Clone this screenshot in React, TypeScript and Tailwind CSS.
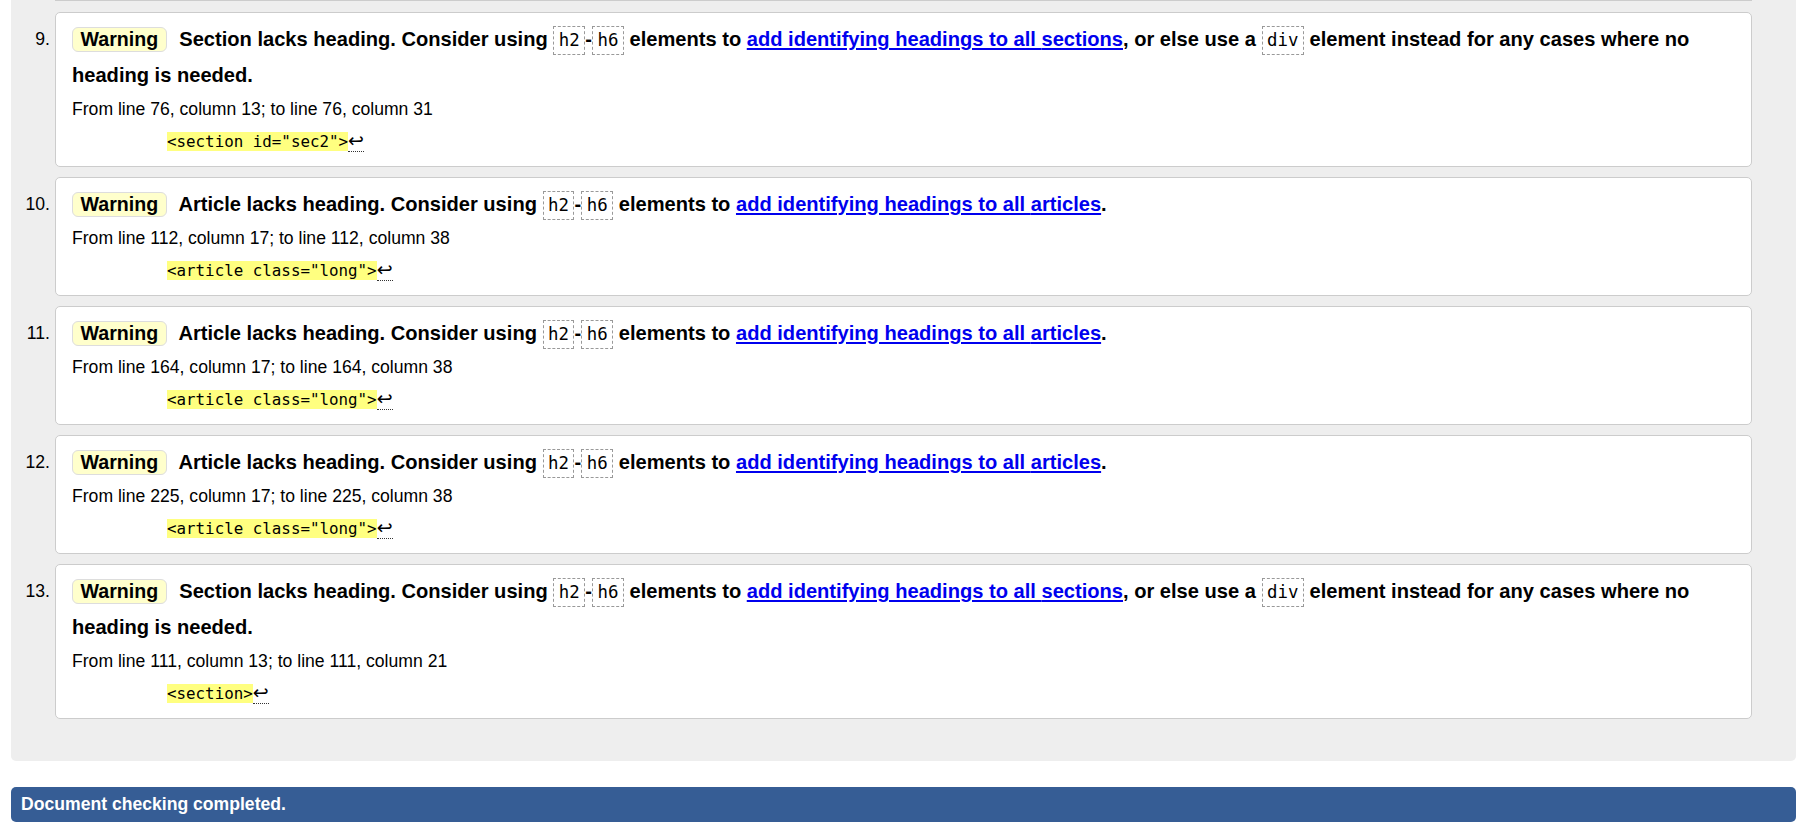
import React from "react";

type Item = {
  n: number;
  kind: "section" | "article";
  from: string;
  code: string;
};

const items: Item[] = [
  { n: 9, kind: "section", from: "From line 76, column 13; to line 76, column 31", code: '<section id="sec2">' },
  { n: 10, kind: "article", from: "From line 112, column 17; to line 112, column 38", code: '<article class="long">' },
  { n: 11, kind: "article", from: "From line 164, column 17; to line 164, column 38", code: '<article class="long">' },
  { n: 12, kind: "article", from: "From line 225, column 17; to line 225, column 38", code: '<article class="long">' },
  { n: 13, kind: "section", from: "From line 111, column 13; to line 111, column 21", code: "<section>" },
];

function Code({ children }: { children: React.ReactNode }) {
  return (
    <code className="inline-block border border-dashed border-[#999] px-[4.5px] py-[3px] leading-[21px] font-normal font-['DejaVu_Sans_Mono',monospace] text-[17.4px]">
      {children}
    </code>
  );
}

function Title({ kind }: { kind: "section" | "article" }) {
  const Kind = kind === "section" ? "Section" : "Article";
  return (
    <p className="font-bold text-[20.1px] leading-[36px]">
      <span className="inline-block border border-[#ddd] bg-[#ffffcc] rounded-[6px] px-[7.5px] text-[19.6px] leading-[23px] mr-[7px]">
        Warning
      </span>{" "}
      {Kind} lacks heading. Consider using <Code>h2</Code>-<Code>h6</Code> elements to{" "}
      <a href="#" className="text-[#0000ee] underline">
        add identifying headings to all {kind === "section" ? "sections" : "articles"}
      </a>
      {kind === "section" ? (
        <>
          , or else use a <Code>div</Code> element instead for any cases where no heading is needed.
        </>
      ) : (
        <>.</>
      )}
    </p>
  );
}

export default function App() {
  return (
    <div className="min-h-screen bg-white text-black font-['Liberation_Sans',Arial,sans-serif]">
      <div className="mx-[11px] bg-[#eeeeee] rounded-b-[5px] pb-[42px]">
        <div className="mx-[44px] h-[1px] bg-[#cccccc]" />
        <ol className="mt-[11px] flex flex-col gap-[10px] pr-[44px]">
          {items.map((it) => (
            <li key={it.n} className="flex">
              <div className="w-[44px] shrink-0 text-right pr-[5px] pt-[9px] text-[17.6px] leading-[36px]">
                {it.n}.
              </div>
              <div className="flex-1 bg-white border border-[#cccccc] rounded-[5px] pt-[8px] px-[16px] pb-[14px]">
                <Title kind={it.kind} />
                <p className="mt-[6px] text-[17.6px] leading-[20px]">{it.from}</p>
                <p className="mt-[12px] pl-[95px] text-[15.84px] leading-[20px] font-['DejaVu_Sans_Mono',monospace]">
                  <span className="bg-[#ffff80]">{it.code}</span>
                  <span className="border-b border-dotted border-[#333] text-[19px] leading-[18px] font-['DejaVu_Sans',sans-serif]">↩</span>
                </p>
              </div>
            </li>
          ))}
        </ol>
      </div>
      <div className="mx-[11px] mt-[26px] h-[35px] rounded-[5px] bg-[#365d95] pl-[10px] text-white font-bold text-[17.6px] leading-[35px]">
        Document checking completed.
      </div>
    </div>
  );
}
